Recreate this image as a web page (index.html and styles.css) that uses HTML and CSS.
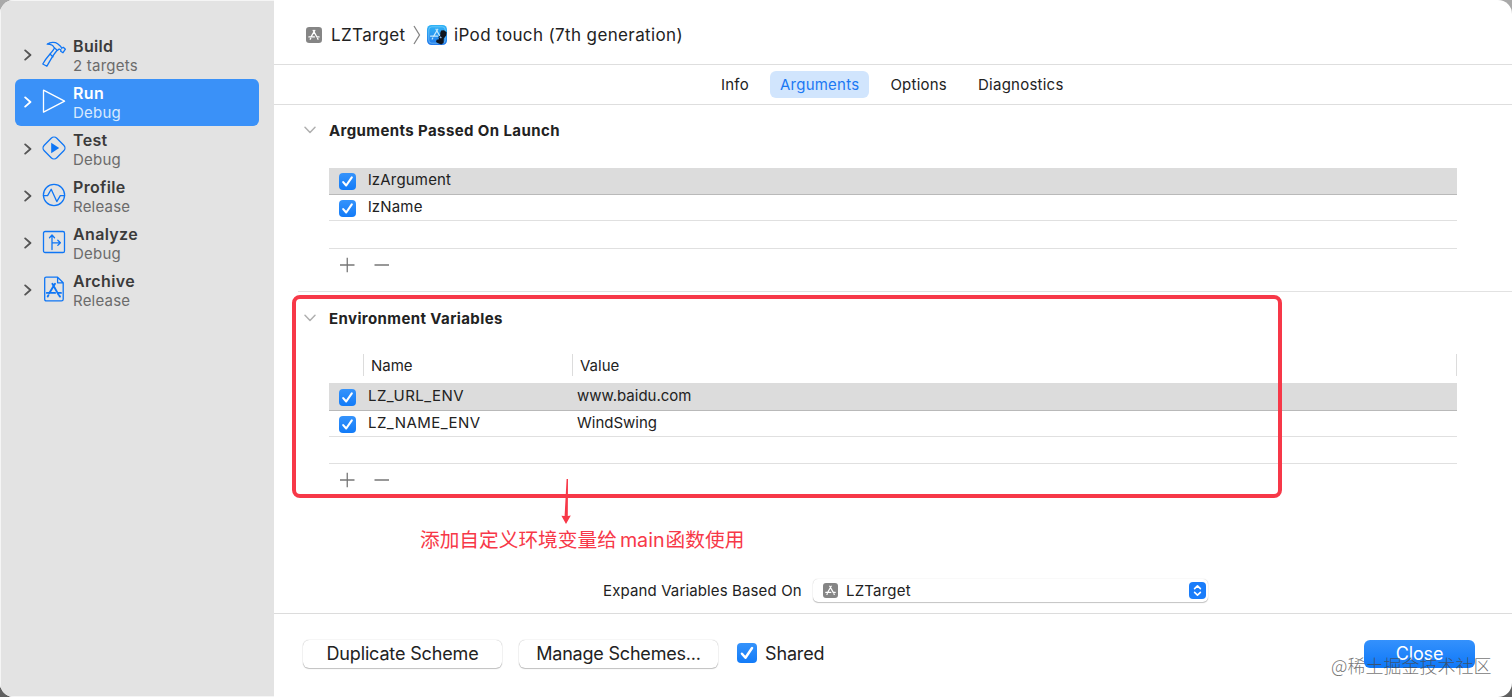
FILE: index.html
```html
<!DOCTYPE html>
<html lang="en">
<head>
    <meta charset="UTF-8">
    <meta name="viewport" content="width=device-width, initial-scale=1.0">
    <title>Edit Scheme</title>
    <link rel="stylesheet" href="styles.css">
</head>
<body>
    <svg class="defs" width="0" height="0">
        <symbol id="chevron" viewBox="0 0 8 12">
            <path d="M1.2 1.4 6.4 6 1.2 10.6" fill="none" stroke="currentColor" stroke-width="1.9" stroke-linecap="round" stroke-linejoin="round"/>
        </symbol>
        <symbol id="disclosure" viewBox="0 0 12 8">
            <path d="M1 1.2 6 6.4 11 1.2" fill="none" stroke="#b0b0b0" stroke-width="1.5" stroke-linecap="round" stroke-linejoin="round"/>
        </symbol>
        <symbol id="check" viewBox="0 0 17 17">
            <path d="M4.2 9.1 7.2 12.5 12.8 4.3" fill="none" stroke="#fff" stroke-width="2.1" stroke-linecap="round" stroke-linejoin="round"/>
        </symbol>
        <symbol id="app" viewBox="0 0 16 16">
            <rect width="16" height="16" rx="3.2" fill="#858585"/>
            <path d="M7.2 3.4 10.9 10M11.6 11.4 12 12.2M8.8 3.4 5.2 9.6M4.7 11.4 4.2 12.2M2.9 9.9H8.4M10.9 9.9H13.1" fill="none" stroke="#fff" stroke-width="1.3" stroke-linecap="round"/>
        </symbol>
    </svg>

    <div class="window">
        <aside class="sidebar">
            <div class="phase">
                <svg class="arrow"><use href="#chevron"/></svg>
                <svg class="phase-icon" viewBox="0 0 26 26">
                    <path d="M6.2 3.2C9.2 1 14.2.9 16.6 2.8L19.8 5.5 20.6 7.2 22.3 6.3 24.4 8.2 22 11.7 19.7 10.2 19.9 8.8 18.1 8 16.4 9.4 13.1 6.6C12.3 4.4 10 3.3 6.2 3.2ZM13.3 7.2C11.6 11.2 5.8 15.4 1.8 23L5.9 25.2C9.3 19.5 12 13.8 16 9.5"/>
                    <path d="M9.2 13.3 11.9 15.8"/>
                </svg>
                <div class="phase-text">
                    <strong>Build</strong>
                    <span>2 targets</span>
                </div>
            </div>
            <div class="phase selected">
                <svg class="arrow"><use href="#chevron"/></svg>
                <svg class="phase-icon" viewBox="0 0 26 26">
                    <path d="M2.5 2.2V24.2L23.6 13.2Z"/>
                </svg>
                <div class="phase-text">
                    <strong>Run</strong>
                    <span>Debug</span>
                </div>
            </div>
            <div class="phase">
                <svg class="arrow"><use href="#chevron"/></svg>
                <svg class="phase-icon" viewBox="0 0 26 26">
                    <rect x="4.1" y="4.1" width="17.8" height="17.8" rx="4" transform="rotate(45 13 13)"/>
                    <path class="solid" d="M10.2 7.8V18.2L18.2 13Z"/>
                </svg>
                <div class="phase-text">
                    <strong>Test</strong>
                    <span>Debug</span>
                </div>
            </div>
            <div class="phase">
                <svg class="arrow"><use href="#chevron"/></svg>
                <svg class="phase-icon" viewBox="0 0 26 26">
                    <circle cx="13" cy="13" r="10.6"/>
                    <path d="M2.4 13.6H6.6L10.2 7.2 15.8 19.6 19.3 13.6H23.6"/>
                </svg>
                <div class="phase-text">
                    <strong>Profile</strong>
                    <span>Release</span>
                </div>
            </div>
            <div class="phase">
                <svg class="arrow"><use href="#chevron"/></svg>
                <svg class="phase-icon" viewBox="0 0 26 26">
                    <rect x="2.5" y="2.5" width="21" height="21" rx="1.6"/>
                    <path d="M11 20.5V6.2M8.5 8.7 11 6 13.5 8.7M11 13.8H19M16.8 11.2 19.4 13.8 16.8 16.4"/>
                </svg>
                <div class="phase-text">
                    <strong>Analyze</strong>
                    <span>Debug</span>
                </div>
            </div>
            <div class="phase">
                <svg class="arrow"><use href="#chevron"/></svg>
                <svg class="phase-icon" viewBox="0 0 26 26">
                    <path d="M5.2 1.2H16.6L22.2 6.8V23.2Q22.2 24.9 20.5 24.9H5.4Q3.7 24.9 3.7 23.2V2.7Q3.7 1.2 5.2 1.2ZM16.6 1.2V6.8H22.2"/>
                    <path class="thick" d="M11.4 7.8 17.5 18.6M18.3 19.6 19 20.6M14 7.8 8.2 17.2M7.4 19.2 6.7 20.4M5.8 16.9H14.1M17 16.9H20"/>
                </svg>
                <div class="phase-text">
                    <strong>Archive</strong>
                    <span>Release</span>
                </div>
            </div>
        </aside>

        <main class="content">
            <header class="path-bar">
                <svg class="path-app"><use href="#app"/></svg>
                <span class="path-target">LZTarget</span>
                <svg class="path-sep" viewBox="0 0 8 20"><path d="M1 1 6.5 10 1 19" fill="none" stroke="#858585" stroke-width="1.3"/></svg>
                <svg class="path-device" viewBox="0 0 20 20">
                    <defs>
                        <linearGradient id="sim" x1="0" y1="0" x2="0" y2="1">
                            <stop offset="0" stop-color="#2fb4f6"/>
                            <stop offset="1" stop-color="#2479ea"/>
                        </linearGradient>
                    </defs>
                    <rect width="20" height="20" rx="4.4" fill="url(#sim)"/>
                    <rect x="1.8" y="1.8" width="16.4" height="16.4" rx="3" fill="none" stroke="#8fd6fb" stroke-width=".6"/>
                    <path d="M9 4.2 12.8 11M10.8 4.2 6.5 11.4M5.8 13 5.2 14M3.6 11.2H10.5" fill="none" stroke="#c4e9fd" stroke-width="1.2" stroke-linecap="round"/>
                    <path d="M14.2 5.4 17 5.2 19.6 7.2 19.2 10.6 16.8 13.6 16.6 18 14.2 19.6 11.2 18.2 9 17 9.6 14.8 12.2 14.2 11.4 12.2 13.4 10.2 13.2 8Z" fill="#10151e"/>
                    <path d="M13.4 11.2 14.8 12.4 14 13.6 12.4 12.6Z" fill="#8fb7df"/>
                </svg>
                <span class="path-name">iPod touch (7th generation)</span>
            </header>

            <nav class="tabs">
                <a class="tab">Info</a>
                <a class="tab active">Arguments</a>
                <a class="tab">Options</a>
                <a class="tab">Diagnostics</a>
            </nav>

            <section class="group launch">
                <h2><svg class="disclosure"><use href="#disclosure"/></svg>Arguments Passed On Launch</h2>
                <div class="list">
                    <div class="row current">
                        <span class="checkbox"><svg><use href="#check"/></svg></span>
                        <span class="cell">lzArgument</span>
                    </div>
                    <div class="row">
                        <span class="checkbox"><svg><use href="#check"/></svg></span>
                        <span class="cell">lzName</span>
                    </div>
                    <div class="row empty"></div>
                </div>
                <div class="tools">
                    <svg viewBox="0 0 50 16"><path d="M0 8H14.5M7.25 .7V15.3M34.5 8H49"/></svg>
                </div>
            </section>

            <section class="group env">
                <h2><svg class="disclosure"><use href="#disclosure"/></svg>Environment Variables</h2>
                <div class="columns">
                    <span class="col-name">Name</span>
                    <span class="col-value">Value</span>
                </div>
                <div class="list">
                    <div class="row current">
                        <span class="checkbox"><svg><use href="#check"/></svg></span>
                        <span class="cell key">LZ_URL_ENV</span>
                        <span class="value">www.baidu.com</span>
                    </div>
                    <div class="row">
                        <span class="checkbox"><svg><use href="#check"/></svg></span>
                        <span class="cell key">LZ_NAME_ENV</span>
                        <span class="value">WindSwing</span>
                    </div>
                    <div class="row empty"></div>
                </div>
                <div class="tools">
                    <svg viewBox="0 0 50 16"><path d="M0 8H14.5M7.25 .7V15.3M34.5 8H49"/></svg>
                </div>
            </section>

            <div class="expand">
                <span class="expand-label">Expand Variables Based On</span>
                <div class="popup">
                    <svg class="popup-app"><use href="#app"/></svg>
                    <span class="popup-text">LZTarget</span>
                    <svg class="stepper" viewBox="0 0 17 17">
                        <rect width="17" height="17" rx="4" fill="#1a7dfa"/>
                        <path d="M5.6 6.6 8.5 3.8 11.4 6.6M5.6 10.4 8.5 13.2 11.4 10.4" fill="none" stroke="#fff" stroke-width="1.6" stroke-linecap="round" stroke-linejoin="round"/>
                    </svg>
                </div>
            </div>

            <footer class="footer">
                <button class="btn">Duplicate Scheme</button>
                <button class="btn manage">Manage Schemes...</button>
                <label class="shared">
                    <span class="checkbox large"><svg><use href="#check"/></svg></span>
                    <span>Shared</span>
                </label>
                <button class="btn primary">Close</button>
            </footer>
        </main>
    </div>

    <!-- annotations -->
    <div class="highlight"></div>
    <svg class="pointer" viewBox="0 0 12 46">
        <path d="M6.6 0 8 0 7.8 37 10.8 36.4 6 45 1.4 36.8 4.6 37Z" fill="#f73848"/>
    </svg>
    <p class="note" lang="zh-CN">添加自定义环境变量给<span class="latin">main</span>函数使用</p>
    <span class="watermark" lang="zh-CN">@稀土掘金技术社区</span>
</body>
</html>
```
FILE: styles.css
```css
* {
    box-sizing: border-box;
}
body {
    margin: 0;
    width: 1512px;
    height: 697px;
    overflow: hidden;
    position: relative;
    background: linear-gradient(#a9a9a9, #606060);
    font-family: Inter, "Noto Sans CJK SC", sans-serif;
    font-size: 15px;
    color: #222;
}
.defs {
    position: absolute;
}
.window {
    display: flex;
    height: 697px;
    background: #fff;
    border-radius: 14px;
    overflow: hidden;
}
.sidebar {
    width: 274px;
    flex: none;
    padding: 31px 15px 0 14px;
    background: #e3e3e3;
    border: 1px solid #f5f5f5;
    border-right: none;
}
.phase {
    display: flex;
    align-items: center;
    height: 47px;
    padding-left: 9px;
    border-radius: 6px;
    color: #555;
}
.arrow {
    width: 8px;
    height: 12px;
    margin-right: 9px;
    margin-bottom: 2px;
}
.phase-icon {
    width: 26px;
    height: 26px;
    margin-right: 6px;
    margin-bottom: 3px;
    fill: none;
    stroke: #0f76f5;
    stroke-width: 1.3;
    stroke-linejoin: round;
    stroke-linecap: round;
}
.phase-icon .solid {
    fill: #0f76f5;
    stroke: none;
}
.phase-icon .thick {
    stroke-width: 1.9;
}
.phase-text {
    display: flex;
    flex-direction: column;
    line-height: 20px;
    padding-top: 1px;
}
.phase-text strong {
    font-size: 16px;
    font-weight: 600;
    letter-spacing: .35px;
    color: #3b3b3b;
}
.phase-text span {
    letter-spacing: .22px;
    color: #6b6b6b;
}
.phase.selected {
    background: #3a91f8;
    color: #fff;
}
.phase.selected .phase-icon {
    stroke: #fff;
}
.phase.selected strong {
    color: #fff;
}
.phase.selected span {
    color: #d9eafe;
}
.content {
    flex: 1;
    display: flex;
    flex-direction: column;
}
.path-bar {
    display: flex;
    align-items: center;
    height: 65px;
    padding: 6px 0 0 32px;
    border-bottom: 1px solid #dedede;
    font-size: 17px;
    letter-spacing: .37px;
}
.path-app {
    width: 16px;
    height: 16px;
    margin-right: 9px;
}
.path-target {
    width: 82px;
}
.path-sep {
    width: 8px;
    height: 20px;
    margin-right: 6px;
}
.path-device {
    width: 20px;
    height: 20px;
    margin-right: 7px;
}
.tabs {
    display: flex;
    align-items: center;
    height: 40px;
    padding-left: 437px;
    border-bottom: 1px solid #dedede;
    letter-spacing: .24px;
}
.tab {
    height: 27px;
    line-height: 27px;
    padding: 0 10px;
    margin-right: 11px;
    border-radius: 6px;
    white-space: nowrap;
}
.tab.active {
    background: #d1e5fd;
    color: #1b78f3;
}
.group {
    margin-left: 24px;
    padding: 0 55px 0 31px;
}
.launch {
    height: 187px;
    border-bottom: 1px solid #e2e2e2;
}
.env {
    height: 286px;
}
h2 {
    display: flex;
    align-items: center;
    height: 20px;
    margin: 15px 0 0 -25px;
    font-size: 15px;
    font-weight: 700;
    letter-spacing: .4px;
}
.env h2 {
    margin-top: 16px;
}
.disclosure {
    width: 12px;
    height: 8px;
    margin-right: 13px;
}
.list {
    margin-top: 28px;
}
.row {
    display: flex;
    height: 26px;
    padding-left: 10px;
    border-bottom: 1px solid #e0e0e0;
    line-height: 24px;
}
.row.current {
    height: 27px;
    background: #dcdcdc;
    border-color: #b9b9b9;
}
.row.empty {
    height: 28px;
}
.checkbox {
    display: block;
    width: 17px;
    height: 17px;
    margin: 5px 12px 0 0;
    border-radius: 4px;
    background: linear-gradient(#3593fb, #127bf8);
    flex: none;
}
.checkbox svg {
    display: block;
    width: 100%;
    height: 100%;
}
.cell {
    letter-spacing: .18px;
}
.key {
    width: 209px;
    letter-spacing: .47px;
}
.tools {
    padding: 8px 0 0 11px;
}
.tools svg {
    display: block;
    width: 50px;
    height: 16px;
    fill: none;
    stroke: #777;
    stroke-width: 1.3;
}
.columns {
    display: flex;
    height: 22px;
    margin: 26px 0 0 34px;
    border-right: 1px solid #dcdcdc;
    line-height: 24px;
}
.col-name,
.col-value {
    width: 209px;
    padding-left: 7px;
    border-left: 1px solid #dcdcdc;
}
.env .list {
    margin-top: 7px;
}
.env .row {
    line-height: 23px;
}
.env .row.current {
    height: 28px;
    line-height: 26px;
}
.env .row.current .checkbox {
    margin-top: 6px;
}
.env .row.empty {
    height: 27px;
}
.expand {
    display: flex;
    align-items: center;
    height: 24px;
    padding-left: 329px;
}
.expand-label {
    width: 210px;
    letter-spacing: .13px;
    white-space: nowrap;
}
.popup {
    display: flex;
    align-items: center;
    width: 395px;
    height: 23px;
    padding: 0 2px 0 10px;
    border-radius: 5px;
    box-shadow: 0 0 1px rgba(0, 0, 0, .25), 0 1px 1px rgba(0, 0, 0, .22);
}
.popup-app {
    width: 15px;
    height: 15px;
    margin-right: 8px;
}
.popup-text {
    letter-spacing: .2px;
}
.stepper {
    width: 17px;
    height: 17px;
    margin-left: auto;
}
.footer {
    display: flex;
    align-items: flex-start;
    height: 84px;
    margin-top: auto;
    padding: 26px 37px 0 29px;
    border-top: 1px solid #dcdcdc;
    font-size: 18px;
    letter-spacing: -.15px;
}
.btn {
    height: 28px;
    width: 199px;
    margin-right: 17px;
    padding: 0;
    border: none;
    border-radius: 6px;
    background: #fff;
    box-shadow: 0 0 1px rgba(0, 0, 0, .35), 0 1px 1px rgba(0, 0, 0, .22);
    font-family: inherit;
    font-size: 18px;
    letter-spacing: -.15px;
    line-height: 26px;
    color: #222;
}
.btn:not(.primary) {
    padding-bottom: 1px;
}
.btn.manage {
    letter-spacing: -.2px;
}
.shared {
    display: flex;
    align-items: center;
    height: 26px;
    margin-left: 2px;
}
.checkbox.large {
    width: 20px;
    height: 20px;
    margin: 0 8px 0 0;
}
.btn.primary {
    width: 111px;
    margin: 0 0 0 auto;
    padding-bottom: 1px;
    background: linear-gradient(#3491fc, #0f78f8);
    box-shadow: none;
    color: #fff;
}
/* marks drawn over the window */
.highlight {
    position: absolute;
    left: 292px;
    top: 295px;
    width: 990px;
    height: 203px;
    border: 4px solid #f73848;
    border-radius: 8px;
}
.pointer {
    position: absolute;
    left: 560px;
    top: 479px;
    width: 12px;
    height: 46px;
}
.note {
    position: absolute;
    left: 420px;
    top: 526px;
    margin: 0;
    font-size: 19.7px;
    line-height: 28px;
    color: #f73848;
    white-space: nowrap;
}
.note .latin {
    margin: 0 1px 0 3px;
}
.watermark {
    position: absolute;
    left: 1331px;
    top: 652px;
    font-family: "Noto Sans CJK SC", sans-serif;
    font-size: 18px;
    font-weight: 300;
    line-height: 26px;
    color: rgba(70, 70, 70, .75);
    white-space: nowrap;
}
```
